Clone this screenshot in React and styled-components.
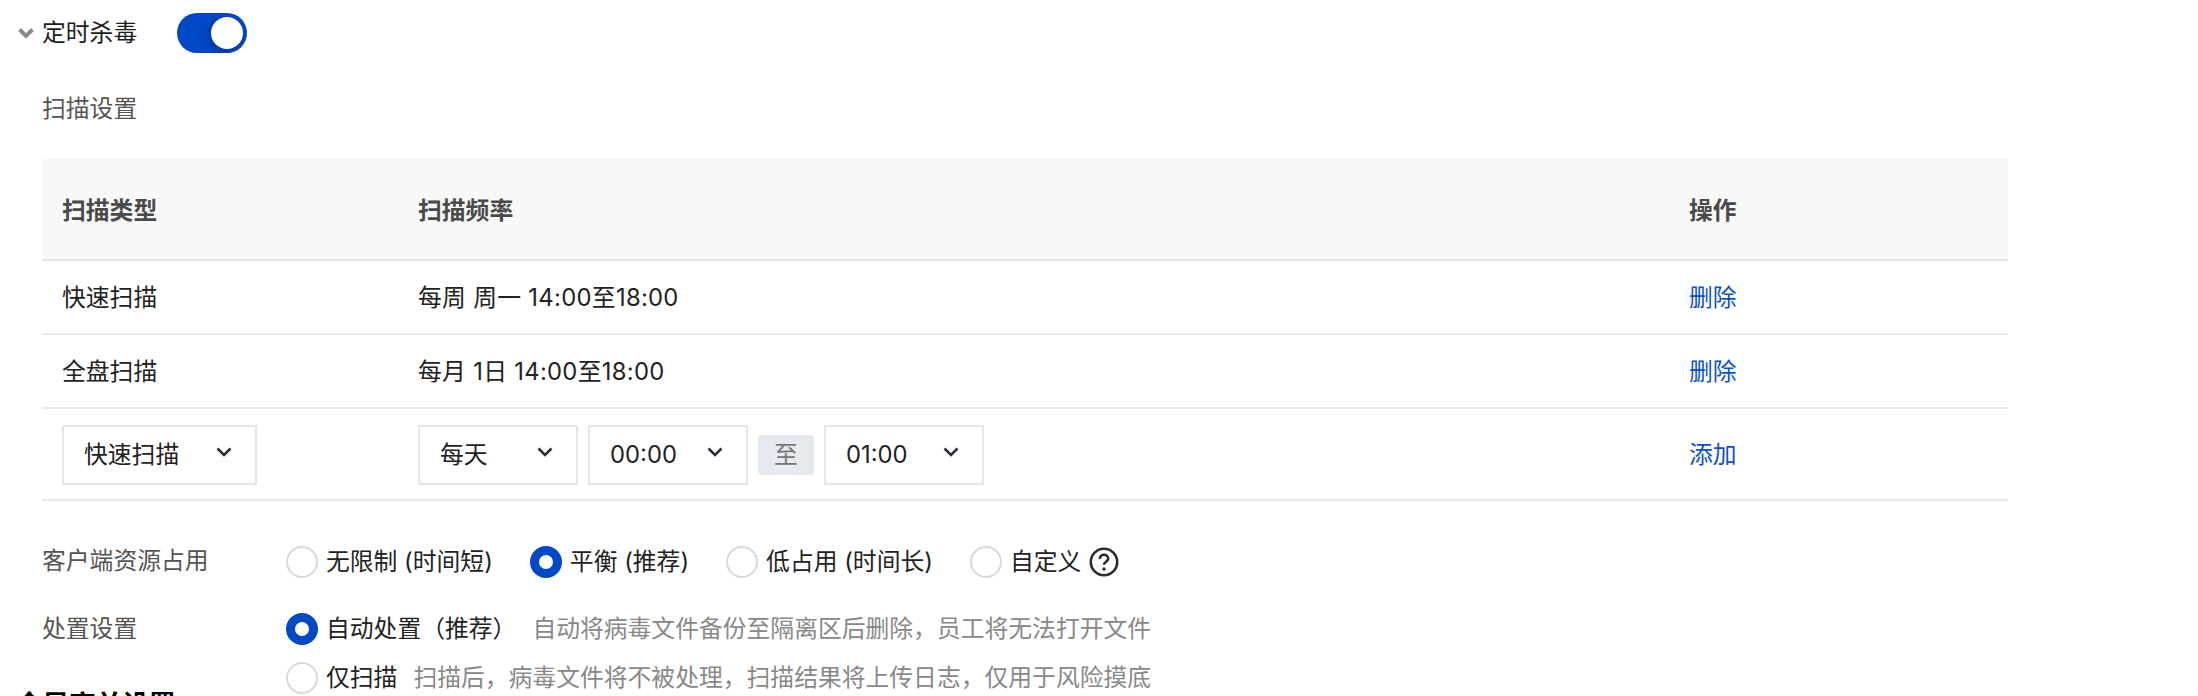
import React from "react";
import styled, { createGlobalStyle } from "styled-components";

const Global = createGlobalStyle`
  html, body { margin: 0; padding: 0; height: 696px; overflow: hidden; background: #fff; }
  body { font-family: Inter, "Noto Sans CJK SC", sans-serif; font-size: 23.8px; color: #222; }
`;

const Page = styled.div`
  width: 2198px;
  height: 696px;
  overflow: hidden;
`;
const Header = styled.div`
  display: flex;
  align-items: center;
  height: 66px;
  padding-left: 18px;
`;
const Caret = styled.svg`
  width: 16px;
  height: 10px;
  margin-right: 8px;
  flex: none;
`;
const Title = styled.span`
  width: 96px;
  color: #1c1c1c;
  line-height: 36px;
`;
const Switch = styled.div`
  width: 70px;
  height: 40px;
  margin-left: 39px;
  border-radius: 20px;
  background: #0049c6;
  display: flex;
  align-items: center;
  justify-content: flex-end;
  padding-right: 4px;
  box-sizing: border-box;
  overflow: hidden;
`;
const Knob = styled.div`
  width: 32px;
  height: 32px;
  border-radius: 50%;
  background: #fff;
  box-shadow: -3px 3px 9px rgba(0, 20, 70, 0.35);
`;
const Body = styled.div`
  padding-left: 42px;
`;
const SubTitle = styled.div`
  color: #555;
  line-height: 36px;
  margin-top: 25px;
`;
const Table = styled.table`
  width: 1966px;
  margin-top: 32px;
  border-collapse: collapse;
  table-layout: fixed;
`;
const Th = styled.th`
  height: 98px;
  padding: 0 20px 2px;
  background: #f8f8f8;
  border-bottom: 2px solid #e3e6eb;
  color: #4a4a4a;
  font-weight: 700;
  font-size: 23.8px;
  text-align: left;
  box-sizing: content-box;
`;
const Td = styled.td`
  height: 70px;
  padding: 2px 20px 0;
  border-bottom: 2px solid #e6e9ee;
  color: #222;
  line-height: 34px;
  box-sizing: content-box;
`;
const FormTd = styled(Td)`
  height: 60px;
  padding-top: 16px;
  padding-bottom: 14px;
`;
const Schedule = styled.span`
  letter-spacing: 0.3px;
`;
const LinkText = styled.a`
  color: #0a50cf;
`;
const Controls = styled.div`
  display: flex;
  align-items: center;
  gap: 10px;
`;
const Select = styled.div`
  width: ${(p) => p.$w}px;
  height: 60px;
  box-sizing: border-box;
  border: 2px solid #e3e6eb;
  padding: 0 23px 0 20px;
  display: flex;
  align-items: center;
  justify-content: space-between;
  color: #222;
`;
const Arrow = styled.svg`
  width: 16px;
  height: 10px;
  flex: none;
  margin-top: -6px;
`;
const ToTag = styled.div`
  width: 56px;
  height: 40px;
  border-radius: 4px;
  background: #e6e9ed;
  color: #777;
  display: flex;
  align-items: center;
  justify-content: center;
`;
const FormRow = styled.div`
  display: flex;
  align-items: ${(p) => p.$align || "center"};
  margin-top: ${(p) => p.$top}px;
`;
const RowLabel = styled.div`
  width: 244px;
  flex: none;
  color: #555;
  line-height: 32px;
  margin-top: ${(p) => p.$shift || 0}px;
`;
const Options = styled.div`
  display: flex;
  align-items: center;
  gap: 37px;
`;
const Stack = styled.div`
  display: flex;
  flex-direction: column;
  gap: 17px;
`;
const Option = styled.div`
  display: flex;
  align-items: center;
  gap: 8px;
  line-height: 32px;
  color: #222;
`;
const Radio = styled.span`
  width: 32px;
  height: 32px;
  flex: none;
  box-sizing: border-box;
  border-radius: 50%;
  background: #fff;
  border: ${(p) => (p.$on ? "9px solid #0049c6" : "2px solid #d3d8e1")};
`;
const Hint = styled.span`
  color: #888;
  margin-left: 8px;
`;
const Help = styled.svg`
  width: 30px;
  height: 30px;
  flex: none;
`;
const Heading = styled.div`
  margin: -5px 0 0 16px;
  font-size: 26.6px;
  font-weight: 700;
  line-height: 30px;
  color: #000;
`;

const Chevron = ({ as: C, color, width }) => (
  <C viewBox="0 0 16 10" fill="none">
    <path d="M1.5 1.5 8 8l6.5-6.5" stroke={color} strokeWidth={width} />
  </C>
);

const Drop = ({ w, children }) => (
  <Select $w={w}>
    <span>{children}</span>
    <Chevron as={Arrow} color="#2b2f36" width="2.6" />
  </Select>
);

export default function App() {
  return (
    <Page>
      <Global />
      <Header>
        <Chevron as={Caret} color="#8a8a8a" width="4" />
        <Title>定时杀毒</Title>
        <Switch>
          <Knob />
        </Switch>
      </Header>
      <Body>
        <SubTitle>扫描设置</SubTitle>
        <Table>
          <colgroup>
            <col style={{ width: 356 }} />
            <col style={{ width: 1271 }} />
            <col style={{ width: 339 }} />
          </colgroup>
          <thead>
            <tr>
              <Th>扫描类型</Th>
              <Th>扫描频率</Th>
              <Th>操作</Th>
            </tr>
          </thead>
          <tbody>
            <tr>
              <Td>快速扫描</Td>
              <Td><Schedule>每周 周一 14:00至18:00</Schedule></Td>
              <Td><LinkText>删除</LinkText></Td>
            </tr>
            <tr>
              <Td>全盘扫描</Td>
              <Td><Schedule>每月 1日 14:00至18:00</Schedule></Td>
              <Td><LinkText>删除</LinkText></Td>
            </tr>
            <tr>
              <FormTd><Drop w={195}>快速扫描</Drop></FormTd>
              <FormTd>
                <Controls>
                  <Drop w={160}>每天</Drop>
                  <Drop w={160}>00:00</Drop>
                  <ToTag>至</ToTag>
                  <Drop w={160}>01:00</Drop>
                </Controls>
              </FormTd>
              <FormTd><LinkText>添加</LinkText></FormTd>
            </tr>
          </tbody>
        </Table>
        <FormRow $top={45}>
          <RowLabel $shift={-3}>客户端资源占用</RowLabel>
          <Options>
            <Option><Radio />无限制 (时间短)</Option>
            <Option><Radio $on />平衡 (推荐)</Option>
            <Option><Radio />低占用 (时间长)</Option>
            <Option>
              <Radio />自定义
              <Help viewBox="0 0 30 30" fill="none">
                <circle cx="15" cy="15" r="13.2" stroke="#2b2b2b" strokeWidth="2.6" />
                <path d="M10.8 12c0-2.6 1.9-4.2 4.2-4.2s4.2 1.6 4.2 3.8c0 3.2-4.2 3.2-4.2 6.2" stroke="#2b2b2b" strokeWidth="2.6" />
                <circle cx="15" cy="22" r="1.7" fill="#2b2b2b" />
              </Help>
            </Option>
          </Options>
        </FormRow>
        <FormRow $top={35} $align="flex-start">
          <RowLabel>处置设置</RowLabel>
          <Stack>
            <Option>
              <Radio $on />自动处置（推荐）
              <Hint>自动将病毒文件备份至隔离区后删除，员工将无法打开文件</Hint>
            </Option>
            <Option>
              <Radio />仅扫描
              <Hint>扫描后，病毒文件将不被处理，扫描结果将上传日志，仅用于风险摸底</Hint>
            </Option>
          </Stack>
        </FormRow>
      </Body>
      <Heading>全局高并设置</Heading>
    </Page>
  );
}
